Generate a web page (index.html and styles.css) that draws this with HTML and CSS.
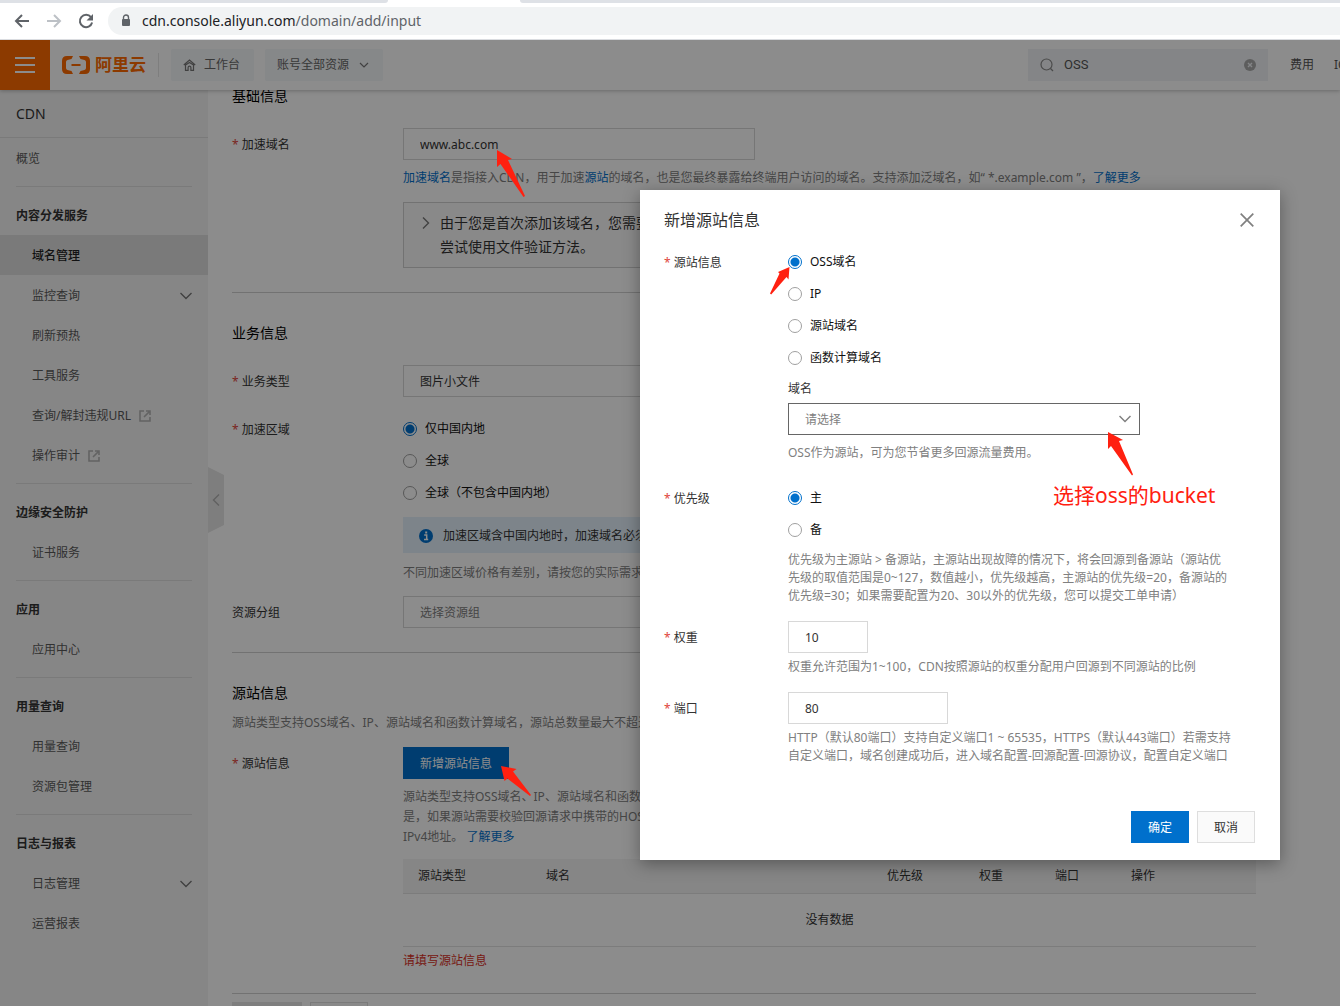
FILE: index.html
```html
<!DOCTYPE html>
<html lang="zh-CN">
<head>
<meta charset="utf-8">
<meta name="viewport" content="width=device-width, initial-scale=1">
<title>CDN 域名管理 - 添加域名</title>
<link rel="stylesheet" href="styles.css">
</head>
<body>
<div class="browser">
  <div class="tabs"><span class="tab-rest tab-rest-left"></span><span class="tab-active"></span><span class="tab-rest tab-rest-right"></span></div>
  <div class="toolbar">
    <button class="tool" type="button" aria-label="后退"><svg width="16" height="16" viewBox="0 0 16 16"><path d="M15 8H2M8 2 2 8l6 6" fill="none" stroke="#5f6368" stroke-width="2"/></svg></button>
    <button class="tool" type="button" aria-label="前进"><svg width="16" height="16" viewBox="0 0 16 16"><path d="M1 8h13M8 2l6 6-6 6" fill="none" stroke="#bdc1c6" stroke-width="2"/></svg></button>
    <button class="tool" type="button" aria-label="刷新"><svg width="16" height="16" viewBox="0 0 16 16"><path d="M13 4.200A6.200 6.200 0 1 0 14.100 9.500" fill="none" stroke="#5f6368" stroke-width="2"/><path d="M15 1v6.500H8.500z" fill="#5f6368"/></svg></button>
    <div class="omnibox">
      <svg width="10" height="14" viewBox="0 0 10 14"><path d="M2.500 6V3.500a2.500 2.500 0 0 1 5 0V6" fill="none" stroke="#5f6368" stroke-width="1.400"/><rect x="1" y="5" width="8" height="7" rx="1" fill="#5f6368"/></svg>
      <span class="url">cdn.console.aliyun.com<span class="url-path">/domain/add/input</span></span>
    </div>
  </div>
</div>

<div class="app">
  <header class="topbar">
    <button class="menu" type="button" aria-label="菜单"><span></span><span></span><span></span></button>
    <a class="logo" href="#">
      <svg width="30" height="18" viewBox="0 0 30 18"><path d="M12 0H6Q1 0 1 5v8q0 5 5 5h6l-1.500-3-4-1Q5 13.600 5 12V6q0-1.600 1.500-2l4-1zM18 0h6q5 0 5 5v8q0 5-5 5h-6l1.500-3 4-1q1.500-.4 1.500-2V6q0-1.600-1.500-2l-4-1zM10.500 8h9v2h-9z" fill="#ff6a00"/></svg>
      <span>阿里云</span>
    </a>
    <span class="divider"></span>
    <button class="chip" type="button">
      <svg width="13" height="12" viewBox="0 0 13 12"><path d="M.8 6 6.500 1l5.700 5M2.500 6v5.300h2.600V8.500q0-1.300 1.400-1.300t1.400 1.300v2.800h2.600V6L6.500 3.400z" fill="none" stroke="#777" stroke-width="1.200"/></svg>
      <span>工作台</span>
    </button>
    <button class="chip chip-select" type="button">
      <span>账号全部资源</span>
      <svg width="10" height="8" viewBox="0 0 10 8"><path d="M1 2l4 4 4-4" fill="none" stroke="#777" stroke-width="1.200"/></svg>
    </button>
    <label class="search">
      <svg width="14" height="14" viewBox="0 0 14 14"><circle cx="6.500" cy="6.500" r="5.500" fill="none" stroke="#888" stroke-width="1.200"/><path d="M10.500 10.500 13 13" stroke="#888" stroke-width="1.200"/></svg>
      <input type="text" value="OSS" aria-label="搜索">
      <svg width="12" height="12" viewBox="0 0 12 12"><circle cx="6" cy="6" r="6" fill="#aaa"/><path d="M4 4l4 4M8 4 4 8" stroke="#f0f3f6" stroke-width="1.400"/></svg>
    </label>
    <nav class="toplinks"><a href="#">费用</a><a href="#">ICP</a></nav>
  </header>

  <div class="body">
    <aside class="sidebar">
      <h1 class="product">CDN</h1>
      <nav>
        <div class="group"><a class="item item-top" href="#">概览</a></div>
        <div class="group">
          <h2 class="group-title">内容分发服务</h2>
          <a class="item active" href="#">域名管理</a>
          <a class="item" href="#">监控查询<svg class="caret" width="12" height="8" viewBox="0 0 12 8"><path d="M.5 1 6 6.500 11.500 1" fill="none" stroke="#777" stroke-width="1.400"/></svg></a>
          <a class="item" href="#">刷新预热</a>
          <a class="item" href="#">工具服务</a>
          <a class="item" href="#">查询/解封违规URL<svg class="ext" width="12" height="12" viewBox="0 0 12 12"><path d="M5 1H1v10h10V7M7 1h4v4M11 1 5 7" fill="none" stroke="#b4b4b4" stroke-width="1.600"/></svg></a>
          <a class="item" href="#">操作审计<svg class="ext" width="12" height="12" viewBox="0 0 12 12"><path d="M5 1H1v10h10V7M7 1h4v4M11 1 5 7" fill="none" stroke="#b4b4b4" stroke-width="1.600"/></svg></a>
        </div>
        <div class="group"><h2 class="group-title">边缘安全防护</h2><a class="item" href="#">证书服务</a></div>
        <div class="group"><h2 class="group-title">应用</h2><a class="item" href="#">应用中心</a></div>
        <div class="group"><h2 class="group-title">用量查询</h2><a class="item" href="#">用量查询</a><a class="item" href="#">资源包管理</a></div>
        <div class="group">
          <h2 class="group-title">日志与报表</h2>
          <a class="item" href="#">日志管理<svg class="caret" width="12" height="8" viewBox="0 0 12 8"><path d="M.5 1 6 6.500 11.500 1" fill="none" stroke="#777" stroke-width="1.400"/></svg></a>
          <a class="item" href="#">运营报表</a>
        </div>
      </nav>
      <button class="collapse" type="button" aria-label="收起"><svg width="8" height="12" viewBox="0 0 8 12"><path d="M7 .5 1.500 6 7 11.500" fill="none" stroke="#b0b0b0" stroke-width="1.400"/></svg></button>
    </aside>

    <main class="main">
      <form class="page">
        <section class="section">
          <h2>基础信息</h2>
          <div class="row">
            <label class="label required" for="domain">加速域名</label>
            <div class="control">
              <div class="pointed">
                <input class="field" id="domain" type="text" value="www.abc.com">
                <svg class="arrow arrow-domain" width="28" height="48" viewBox="0 0 28 48"><path d="M0 0 15 9 11 10 28 46 26.500 47 3.500 14 0 17z" fill="#ff2010"/></svg>
              </div>
              <p class="help"><a href="#">加速域名</a>是指接入CDN，用于加速<a href="#">源站</a>的域名，也是您最终暴露给终端用户访问的域名。支持添加泛域名，如“ *.example.com ”，<a href="#">了解更多</a></p>
              <div class="notice">
                <svg width="8" height="12" viewBox="0 0 8 12"><path d="M1 .5 6.500 6 1 11.500" fill="none" stroke="#777" stroke-width="1.400"/></svg>
                <p>由于您是首次添加该域名，您需要<br>尝试使用文件验证方法。</p>
              </div>
            </div>
          </div>
        </section>

        <section class="section">
          <h2>业务信息</h2>
          <div class="row">
            <label class="label required" for="biz">业务类型</label>
            <div class="control">
              <select class="field" id="biz"><option>图片小文件</option></select>
            </div>
          </div>
          <div class="row" role="radiogroup" aria-labelledby="region-label">
            <span class="label required" id="region-label">加速区域</span>
            <div class="control">
              <div class="radios">
                <label><input type="radio" name="region" checked>仅中国内地</label>
                <label><input type="radio" name="region">全球</label>
                <label><input type="radio" name="region">全球（不包含中国内地）</label>
              </div>
              <div class="info">
                <svg width="14" height="14" viewBox="0 0 14 14"><circle cx="7" cy="7" r="7" fill="#0070cc"/><path d="M5.200 6h2.500v4.500M5 10.500h4.200" fill="none" stroke="#fff" stroke-width="1.500"/><rect x="6.200" y="2.500" width="2" height="2" fill="#fff"/></svg>
                <span>加速区域含中国内地时，加速域名必须</span>
              </div>
              <p class="help help-tight">不同加速区域价格有差别，请按您的实际需求</p>
            </div>
          </div>
          <div class="row row-group">
            <label class="label" for="group">资源分组</label>
            <div class="control">
              <select class="field placeholder" id="group"><option>选择资源组</option></select>
            </div>
          </div>
        </section>

        <section class="section section-origin">
          <h2>源站信息</h2>
          <p class="desc">源站类型支持OSS域名、IP、源站域名和函数计算域名，源站总数量最大不超过</p>
          <div class="row">
            <span class="label required">源站信息</span>
            <div class="control">
              <div class="pointed">
                <button class="btn btn-primary" type="button">新增源站信息</button>
                <svg class="arrow arrow-add" width="30" height="30" viewBox="0 0 30 30"><path d="M0 0 15.500 3 12 5.500 30 29 29 30 6.500 12.500 3.500 15z" fill="#ff2010"/></svg>
              </div>
              <p class="help help-lines">源站类型支持OSS域名、IP、源站域名和函数<br>是，如果源站需要校验回源请求中携带的HOST<br>IPv4地址。 <a href="#">了解更多</a></p>
              <table class="table">
                <colgroup><col class="col-type"><col><col class="col-priority"><col class="col-num"><col class="col-num"><col class="col-action"></colgroup>
                <thead><tr><th>源站类型</th><th>域名</th><th>优先级</th><th>权重</th><th>端口</th><th>操作</th></tr></thead>
                <tbody><tr><td colspan="6">没有数据</td></tr></tbody>
              </table>
              <p class="error">请填写源站信息</p>
            </div>
          </div>
        </section>
        <div class="actions">
          <button class="btn btn-disabled" type="button" disabled>下一步</button>
          <button class="btn" type="button">取消</button>
        </div>
      </form>
    </main>
  </div>

  <div class="mask">
    <form class="dialog" role="dialog" aria-labelledby="dialog-title">
      <div class="dialog-head">
        <h2 id="dialog-title">新增源站信息</h2>
        <button class="close" type="button" aria-label="关闭"><svg width="14" height="14" viewBox="0 0 14 14"><path d="M.7.7l12.600 12.600M13.300.7.7 13.300" stroke="#808080" stroke-width="1.700"/></svg></button>
      </div>
      <div class="dialog-body">
        <div class="drow">
          <span class="label required" id="origin-label">源站信息</span>
          <div>
            <div class="radios pointed" role="radiogroup" aria-labelledby="origin-label">
              <label><input type="radio" name="origin" checked>OSS域名</label>
              <label><input type="radio" name="origin">IP</label>
              <label><input type="radio" name="origin">源站域名</label>
              <label><input type="radio" name="origin">函数计算域名</label>
              <svg class="arrow arrow-radio" width="20" height="28" viewBox="0 0 20 28"><path d="M19.500 0 8 5l1.500 1.500L0 26.500l1.200 1L16.500 10l2 2.500z" fill="#ff2010"/></svg>
            </div>
            <label class="sublabel" for="bucket">域名</label>
            <div class="select pointed">
              <select class="field field-focus placeholder" id="bucket"><option>请选择</option></select>
              <svg class="chevron" width="12" height="8" viewBox="0 0 12 8"><path d="M.5 1 6 6.500 11.500 1" fill="none" stroke="#808080" stroke-width="1.500"/></svg>
              <svg class="arrow arrow-bucket" width="26" height="44" viewBox="0 0 26 44"><path d="M0 0 15 8 11 9 25 42.500 24 43.500 3 14 0 17z" fill="#ff2010"/></svg>
              <span class="remark">选择oss的bucket</span>
            </div>
            <p class="hint hint-bucket">OSS作为源站，可为您节省更多回源流量费用。</p>
          </div>
        </div>
        <div class="drow">
          <span class="label required" id="prio-label">优先级</span>
          <div>
            <div class="radios" role="radiogroup" aria-labelledby="prio-label">
              <label><input type="radio" name="prio" checked>主</label>
              <label><input type="radio" name="prio">备</label>
            </div>
            <p class="hint">优先级为主源站 &gt; 备源站，主源站出现故障的情况下，将会回源到备源站（源站优<br>先级的取值范围是0~127，数值越小，优先级越高，主源站的优先级=20，备源站的<br>优先级=30；如果需要配置为20、30以外的优先级，您可以提交工单申请）</p>
          </div>
        </div>
        <div class="drow">
          <label class="label required" for="weight">权重</label>
          <div>
            <input class="field field-weight" id="weight" type="text" value="10">
            <p class="hint">权重允许范围为1~100，CDN按照源站的权重分配用户回源到不同源站的比例</p>
          </div>
        </div>
        <div class="drow">
          <label class="label required" for="port">端口</label>
          <div>
            <input class="field field-port" id="port" type="text" value="80">
            <p class="hint">HTTP（默认80端口）支持自定义端口1 ~ 65535，HTTPS（默认443端口）若需支持<br>自定义端口，域名创建成功后，进入域名配置-回源配置-回源协议，配置自定义端口</p>
          </div>
        </div>
      </div>
      <div class="dialog-foot">
        <button class="btn btn-primary" type="button">确定</button>
        <button class="btn" type="button">取消</button>
      </div>
    </form>
  </div>
</div>
</body>
</html>
```
FILE: styles.css
```css
* { box-sizing: border-box; }

body {
  margin: 0;
  height: 100vh;
  display: flex;
  flex-direction: column;
  overflow: hidden;
  font: 12px/20px "Noto Sans", "Noto Sans CJK SC", sans-serif;
  color: #333;
  background: #fff;
}

h1, h2, p { margin: 0; font-weight: 400; }
a { color: #0070cc; text-decoration: none; }
button, input, select { font: inherit; color: inherit; margin: 0; }
button { padding: 0; border: 0; background: none; }
svg { flex: none; display: block; }

/* Browser chrome */
.browser { flex: none; border-bottom: 1px solid #dadce0; }
.tabs { display: flex; height: 3px; background: #fff; }
.tab-active { width: 132px; }
.tab-rest { background: #dee1e6; }
.tab-rest-left { width: 388px; border-bottom-right-radius: 3px; }
.tab-rest-right { flex: 1; border-bottom-left-radius: 3px; }
.toolbar { display: flex; align-items: center; height: 36px; padding-left: 14px; gap: 16px; }
.tool { width: 16px; height: 16px; }
.omnibox {
  flex: 1;
  display: flex;
  align-items: center;
  gap: 11px;
  height: 28px;
  margin-left: -2px;
  padding-left: 13px;
  background: #f1f3f4;
  border-radius: 14px 0 0 14px;
}
.url { font-size: 14px; color: #202124; }
.url-path { color: #5f6368; }

/* Console shell */
.app { position: relative; flex: 1; min-height: 0; overflow: hidden; display: flex; flex-direction: column; }
.topbar {
  position: relative;
  z-index: 1;
  flex: none;
  display: flex;
  align-items: center;
  height: 50px;
  background: #fff;
  box-shadow: 0 1px 4px rgba(0, 0, 0, .25);
}
.menu {
  flex: none;
  width: 50px;
  height: 50px;
  padding: 0 15px;
  background: #ff6a00;
  display: flex;
  flex-direction: column;
  justify-content: center;
  gap: 5px;
}
.menu span { display: block; width: 20px; height: 2px; background: #fff; }
.logo {
  flex: none;
  display: flex;
  align-items: center;
  gap: 4px;
  margin-left: 11px;
  color: #ff6a00;
  font-size: 17px;
  font-weight: 700;
}
.divider { flex: none; width: 1px; height: 24px; margin: 0 12px; background: #e5e5e5; }
.chip {
  flex: none;
  display: flex;
  align-items: center;
  gap: 8px;
  height: 32px;
  padding: 0 14px 0 12px;
  margin-right: 11px;
  border-radius: 2px;
  background: #f4f7f9;
  color: #666;
}
.chip-select { gap: 10px; }
.search {
  flex: none;
  display: flex;
  align-items: center;
  gap: 10px;
  width: 240px;
  height: 32px;
  margin-left: auto;
  padding: 0 12px;
  background: #f0f3f6;
}
.search input { flex: 1; min-width: 0; padding: 0; border: 0; outline: 0; background: none; font-family: Roboto, sans-serif; font-size: 13px; color: #555; }
.toplinks { flex: none; display: flex; gap: 20px; width: 72px; padding-left: 22px; }
.toplinks a { flex: none; color: #555; }

.body { flex: 1; min-height: 0; display: flex; }

/* Sidebar */
.sidebar { position: relative; flex: none; width: 208px; background: #f5f5f5; }
.product { height: 48px; padding: 0 16px; font-size: 14px; line-height: 48px; border-bottom: 1px solid #dedede; }
.group { padding-bottom: 8px; }
.group + .group::before { content: ""; display: block; height: 1px; margin: 0 16px 8px; background: #dedede; }
.group-title { height: 40px; padding-left: 16px; font-size: 12px; font-weight: 700; line-height: 42px; }
.item { display: flex; align-items: center; height: 40px; padding: 1px 16px 0 32px; color: #5a5a5a; }
.item-top { padding-left: 16px; }
.item.active { background: #dedede; color: #222; font-weight: 500; }
.caret { margin-left: auto; }
.ext { margin-left: 8px; }
.collapse {
  position: absolute;
  left: 100%;
  top: 377px;
  width: 16px;
  height: 66px;
  display: grid;
  place-items: center;
  background: #e6e6e6;
  clip-path: polygon(0 0, 100% 8px, 100% 58px, 0 100%);
}

/* Add-domain form */
.main { flex: 1; min-width: 0; margin-top: -4px; padding: 0 24px; }
.page { max-width: 1024px; }
.section { padding-bottom: 24px; margin-bottom: 30px; border-bottom: 1px solid #d0d0d0; }
.section h2 { font-size: 14px; color: #000; }
.row { display: grid; grid-template-columns: 171px 1fr; }
.row + .row { margin-top: 16px; }
.row + .row-group { margin-top: 0; }
h2 + .row { margin-top: 22px; }
.label { height: 32px; line-height: 34px; }
.required::before { content: "*"; margin-right: 3px; color: #e0453c; }
.control { min-width: 0; }
.pointed { position: relative; }
.field {
  display: block;
  width: 352px;
  height: 32px;
  padding: 1px 16px 0;
  border: 1px solid #d8d8d8;
  border-radius: 0;
  outline: 0;
  background: #fff;
  appearance: none;
}
.placeholder { color: #808080; }
.help { color: #808080; line-height: 20px; margin-top: 8px; }
.help-tight { margin: 10px 0 13px; }
.notice {
  display: flex;
  gap: 10px;
  margin-top: 14px;
  padding: 8px 18px;
  border: 1px solid #d0d0d0;
  background: #fafafa;
  font-size: 14px;
  line-height: 24px;
}
.notice svg { margin-top: 6px; }
.radios { display: flex; flex-direction: column; }
.radios label { display: flex; align-items: center; gap: 8px; height: 32px; color: #111; }
.radios input {
  appearance: none;
  flex: none;
  width: 14px;
  height: 14px;
  border: 1px solid #a0a0a0;
  border-radius: 50%;
  background: #fff;
}
.radios input:checked { border-color: #0070cc; background: radial-gradient(circle, #0070cc 4px, #fff 5px); }
.info {
  display: flex;
  align-items: center;
  gap: 10px;
  height: 36px;
  margin-top: 8px;
  padding: 2px 16px 0;
  background: #e4f1fb;
}

.desc { color: #808080; margin: 10px 0 14px; }
.section-origin { padding-bottom: 22px; margin-bottom: 8px; }
.table { width: 100%; margin-top: 12px; table-layout: fixed; border-collapse: collapse; }
.table th { height: 34px; padding: 0 15px; background: #f5f5f5; border-bottom: 1px solid #e2e2e2; font-weight: 400; text-align: left; }
.table td { height: 53px; padding: 0; text-align: center; border-bottom: 1px solid #e2e2e2; }
.col-type { width: 128px; }
.col-priority { width: 92px; }
.col-num { width: 76px; }
.col-action { width: 140px; }
.error { margin-top: 4px; color: #d93026; }

.btn {
  height: 32px;
  padding: 1px 16px 0;
  border: 1px solid #dedede;
  background: #fafafa;
  color: #333;
}
.btn-primary { border-color: #0070cc; background: #0070cc; color: #fff; }
.btn-disabled { border-color: #e5e5e5; background: #e5e5e5; color: #aaa; }
.actions { display: flex; gap: 8px; }

/* Modal */
.mask {
  position: absolute;
  inset: 0;
  z-index: 2;
  display: flex;
  justify-content: flex-end;
  align-items: flex-start;
  padding: 150px 60px 0;
  background: rgba(0, 0, 0, .45);
}
.dialog { width: 640px; padding: 16px 25px 17px 24px; background: #fff; box-shadow: 0 4px 16px rgba(0, 0, 0, .35); }
.dialog-head { display: flex; align-items: center; justify-content: space-between; height: 28px; padding-right: 1px; }
.dialog-head h2 { font-size: 16px; }
.close { width: 14px; height: 14px; }
.dialog-body { display: grid; gap: 16px; padding-top: 12px; }
.drow { display: grid; grid-template-columns: 124px 1fr; }
.sublabel { display: block; margin: 6px 0 5px; line-height: 18px; }
.select { display: grid; grid-template-columns: 352px; align-items: center; }
.select .field { grid-area: 1 / 1; }
.chevron { grid-area: 1 / 1; justify-self: end; margin-right: 9px; pointer-events: none; }
.field-focus { border-color: #666; }
.field-weight { width: 80px; }
.field-port { width: 160px; }
.hint { margin-top: 5px; line-height: 18px; color: #808080; white-space: nowrap; }
.hint-bucket { margin: 9px 0 4px; }
.dialog-foot { display: flex; justify-content: flex-end; gap: 8px; padding-top: 46px; }

/* Tutorial annotations */
.arrow { position: absolute; z-index: 3; pointer-events: none; }
.arrow-domain { left: 94px; top: 22px; }
.arrow-add { left: 98px; top: 19px; }
.arrow-radio { left: -18px; top: 21px; }
.arrow-bucket { left: 320px; top: 29px; }
.remark { position: absolute; left: 265px; top: 78px; font-size: 21px; line-height: 28px; color: #ff2010; white-space: nowrap; }
```
